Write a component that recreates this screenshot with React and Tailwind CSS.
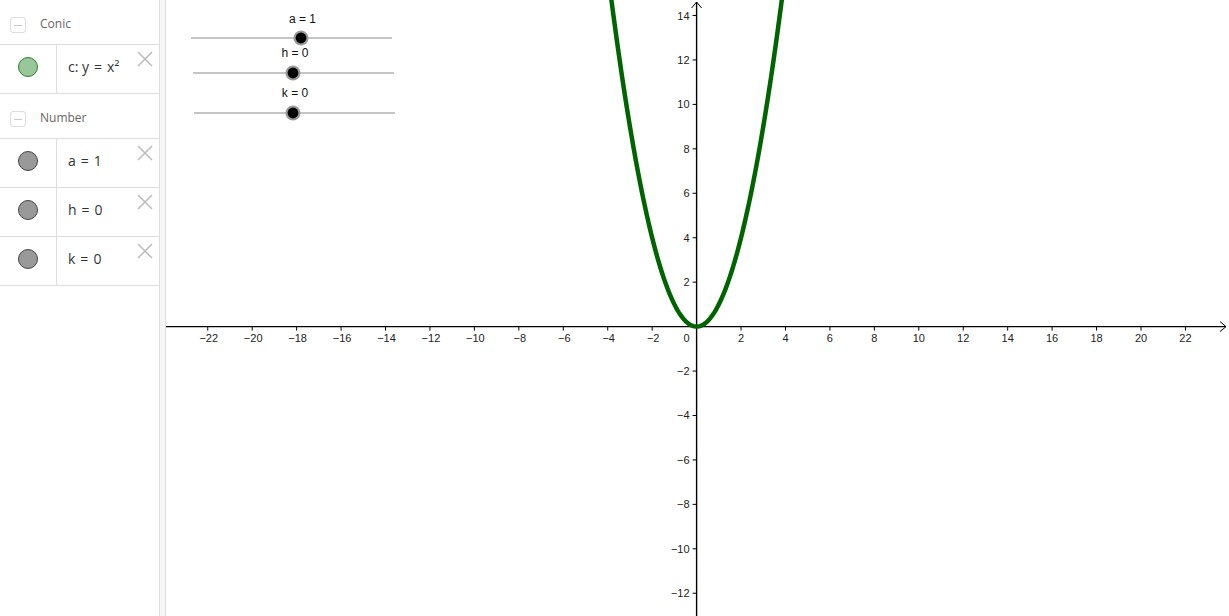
import React from "react";

const S = 22.22;
const OX = 530.6;
const OY = 326.6;

function MinusBox() {
  return (
    <div className="w-4 h-4 rounded-[3px] border border-[#dcdcdc] flex items-center justify-center">
      <div className="w-[8px] h-[1px] bg-[#c8c8c8]" />
    </div>
  );
}

function Header({ label }) {
  return (
    <div className="h-[45px] border-b border-[#dddddd] flex items-center pl-[10px] pt-[6px]">
      <MinusBox />
      <span className="ml-[14px] text-[12px] text-[#666666] -mt-[3px]">{label}</span>
    </div>
  );
}

function XIcon() {
  return (
    <svg width="16" height="16" viewBox="0 0 16 16">
      <path d="M1 1 L15 15 M15 1 L1 15" stroke="#bdbdbd" strokeWidth="1.6" fill="none" />
    </svg>
  );
}

function Item({ name, value, fill, stroke }) {
  return (
    <div className="h-[49px] border-b border-[#dddddd] flex relative">
      <div className="w-[57px] border-r border-[#dddddd] flex items-center justify-center pr-[1px] pb-[4px]">
        <div
          className="w-[20px] h-[20px] rounded-full border"
          style={{ backgroundColor: fill, borderColor: stroke }}
        />
      </div>
      <div className="flex-1 flex items-center pl-[11px] pb-[5px] text-[14px] text-[#333333] whitespace-pre">
        <span>{name}</span>
        <span className="mx-[5px]">=</span>
        <span>{value}</span>
      </div>
      <div className="absolute right-[6px] top-[6px]">
        <XIcon />
      </div>
    </div>
  );
}

function Slider({ x1, x2, y, knob, label, labelX, labelY }) {
  return (
    <g>
      <line x1={x1} y1={y} x2={x2} y2={y} stroke="#8a8a8a" strokeWidth="1" />
      <circle cx={knob} cy={y} r="7.6" fill="#9a9a9a" />
      <circle cx={knob} cy={y} r="5.4" fill="#000000" />
      <text x={labelX} y={labelY} textAnchor="middle" fontSize="12" fill="#111" fontFamily="'Liberation Sans', Arial, sans-serif">
        {label}
      </text>
    </g>
  );
}

function Graph() {
  const pts = [];
  for (let x = -4.2; x <= 4.2001; x += 0.05) {
    pts.push(`${(OX + x * S).toFixed(2)},${(OY - x * x * S).toFixed(2)}`);
  }
  const d = "M" + pts.join(" L");
  const xt = [];
  for (let k = -22; k <= 22; k += 2) if (k !== 0) xt.push(k);
  const yt = [];
  for (let k = -12; k <= 14; k += 2) if (k !== 0) yt.push(k);
  const lab = (k) => (k < 0 ? "\u2212" + Math.abs(k) : String(k));
  const sx = (v) => v - 166;
  return (
    <svg width="1063" height="616" viewBox="0 0 1063 616" className="block">
      <g fontFamily="'Liberation Sans', Arial, sans-serif" fontSize="11" fill="#222">
        {xt.map((k) => (
          <g key={"x" + k}>
            <line x1={OX + k * S} y1={OY} x2={OX + k * S} y2={OY + 4} stroke="#000" strokeWidth="1" />
            <text x={OX + k * S + (k < 0 ? 1 : 0)} y={OY + 15} textAnchor="middle">
              {lab(k)}
            </text>
          </g>
        ))}
        {yt.map((k) => (
          <g key={"y" + k}>
            <line x1={OX - 4} y1={OY - k * S} x2={OX} y2={OY - k * S} stroke="#000" strokeWidth="1" />
            <text x={OX - 7} y={OY - k * S + 4} textAnchor="end">
              {lab(k)}
            </text>
          </g>
        ))}
        <text x={OX - 7} y={OY + 15} textAnchor="end">0</text>
      </g>
      <line x1="0" y1={OY} x2={sx(1226)} y2={OY} stroke="#000" strokeWidth="1.4" />
      <path d={`M${sx(1220)} ${OY - 5} L${sx(1226)} ${OY} L${sx(1220)} ${OY + 5}`} stroke="#000" strokeWidth="1" fill="none" />
      <line x1={OX} y1="2" x2={OX} y2="616" stroke="#000" strokeWidth="1.4" />
      <path d={`M${OX - 5} 8 L${OX} 2 L${OX + 5} 8`} stroke="#000" strokeWidth="1" fill="none" />
      <path d={d} stroke="#006400" strokeWidth="4.5" fill="none" strokeLinejoin="round" />
      <Slider x1={sx(191)} x2={sx(392)} y={38} knob={sx(301)} label="a = 1" labelX={sx(302.5)} labelY={23} />
      <Slider x1={sx(193)} x2={sx(394)} y={73} knob={sx(293)} label="h = 0" labelX={sx(295)} labelY={57} />
      <Slider x1={sx(194)} x2={sx(395)} y={113} knob={sx(293)} label="k = 0" labelX={sx(295)} labelY={97} />
    </svg>
  );
}

export default function App() {
  return (
    <div className="w-[1229px] h-[616px] flex bg-white overflow-hidden" style={{ fontFamily: "'Open Sans', 'Noto Sans', sans-serif" }}>
      <div className="w-[159px] h-full flex flex-col bg-white">
        <Header label="Conic" />
        <Item name="c: y" value="x²" fill="#99c799" stroke="#2e7d2e" />
        <Header label="Number" />
        <Item name="a" value="1" fill="#999999" stroke="#444444" />
        <Item name="h" value="0" fill="#999999" stroke="#444444" />
        <Item name="k" value="0" fill="#999999" stroke="#444444" />
      </div>
      <div className="w-[7px] h-full bg-[#f6f6f6] border-x border-[#dddddd]" />
      <div className="flex-1 h-full bg-white">
        <Graph />
      </div>
    </div>
  );
}
